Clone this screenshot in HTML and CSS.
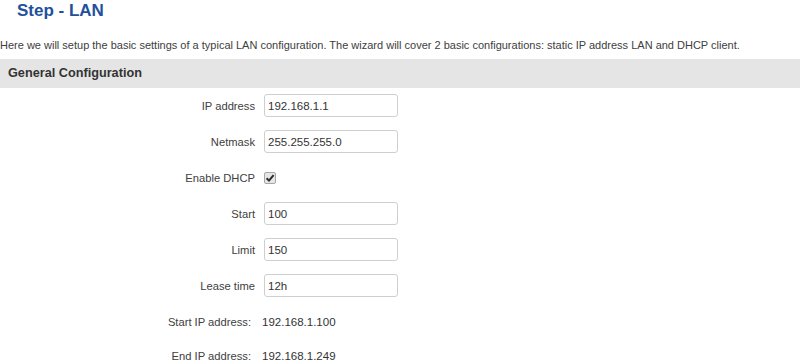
FILE: index.html
```html
<!DOCTYPE html>
<html>
<head>
<meta charset="utf-8">
<link rel="stylesheet" href="styles.css">
</head>
<body>
<h2 class="title">Step - LAN</h2>
<p class="desc">Here we will setup the basic settings of a typical LAN configuration. The wizard will cover 2 basic configurations: static IP address LAN and DHCP client.</p>
<div class="section-head">General Configuration</div>
<div class="form">
  <div class="row"><label class="lbl">IP address</label><input class="field" type="text" value="192.168.1.1"></div>
  <div class="row"><label class="lbl">Netmask</label><input class="field" type="text" value="255.255.255.0"></div>
  <div class="row"><label class="lbl">Enable DHCP</label><span class="check"><svg width="10" height="10" viewBox="0 0 10 10"><path d="M1.6 5.2 L4 7.6 L8.6 2.2" fill="none" stroke="#2b2b2b" stroke-width="2"/></svg></span></div>
  <div class="row"><label class="lbl">Start</label><input class="field" type="text" value="100"></div>
  <div class="row"><label class="lbl">Limit</label><input class="field" type="text" value="150"></div>
  <div class="row"><label class="lbl">Lease time</label><input class="field" type="text" value="12h"></div>
  <div class="row static"><span class="lbl">Start IP address:</span><span class="val">192.168.1.100</span></div>
  <div class="row static last"><span class="lbl">End IP address:</span><span class="val">192.168.1.249</span></div>
</div>
</body>
</html>
```
FILE: styles.css
```css
html, body {
  margin: 0;
  padding: 0;
  background: #ffffff;
  font-family: "Liberation Sans", Arial, sans-serif;
  color: #404040;
}
.title {
  margin: 0;
  padding-left: 17px;
  font-size: 17px;
  line-height: 22px;
  font-weight: bold;
  color: #23509b;
}
.desc {
  margin: 15px 0 0 0;
  font-size: 11px;
  line-height: 16px;
  color: #404040;
  white-space: nowrap;
}
.section-head {
  margin-top: 6px;
  height: 29px;
  line-height: 29px;
  padding-left: 8px;
  background: #e5e5e5;
  font-size: 12.7px;
  font-weight: bold;
  color: #333333;
}
.form {
  display: flex;
  flex-direction: column;
  gap: 13px;
  padding-top: 6px;
}
.row {
  display: flex;
  align-items: center;
  height: 23px;
  column-gap: 9px;
}
.lbl {
  width: 255px;
  text-align: right;
  font-size: 11.2px;
  color: #404040;
}
.field {
  box-sizing: border-box;
  width: 134px;
  height: 23px;
  margin: 0;
  padding: 0 3px;
  border: 1px solid #cfcfcf;
  border-radius: 3px;
  font-family: "Liberation Sans", Arial, sans-serif;
  font-size: 11.5px;
  color: #333333;
  background: #ffffff;
  outline: none;
}
.check {
  box-sizing: border-box;
  width: 12px;
  height: 12px;
  border: 1px solid #a6a6a6;
  border-radius: 2px;
  background: #e6e6e6;
  display: flex;
  align-items: center;
  justify-content: center;
}
.static {
  column-gap: 11px;
}
.static .lbl {
  width: 251px;
}
.last {
  margin-top: -2px;
}
.val {
  font-size: 11.5px;
  color: #333333;
}
```
